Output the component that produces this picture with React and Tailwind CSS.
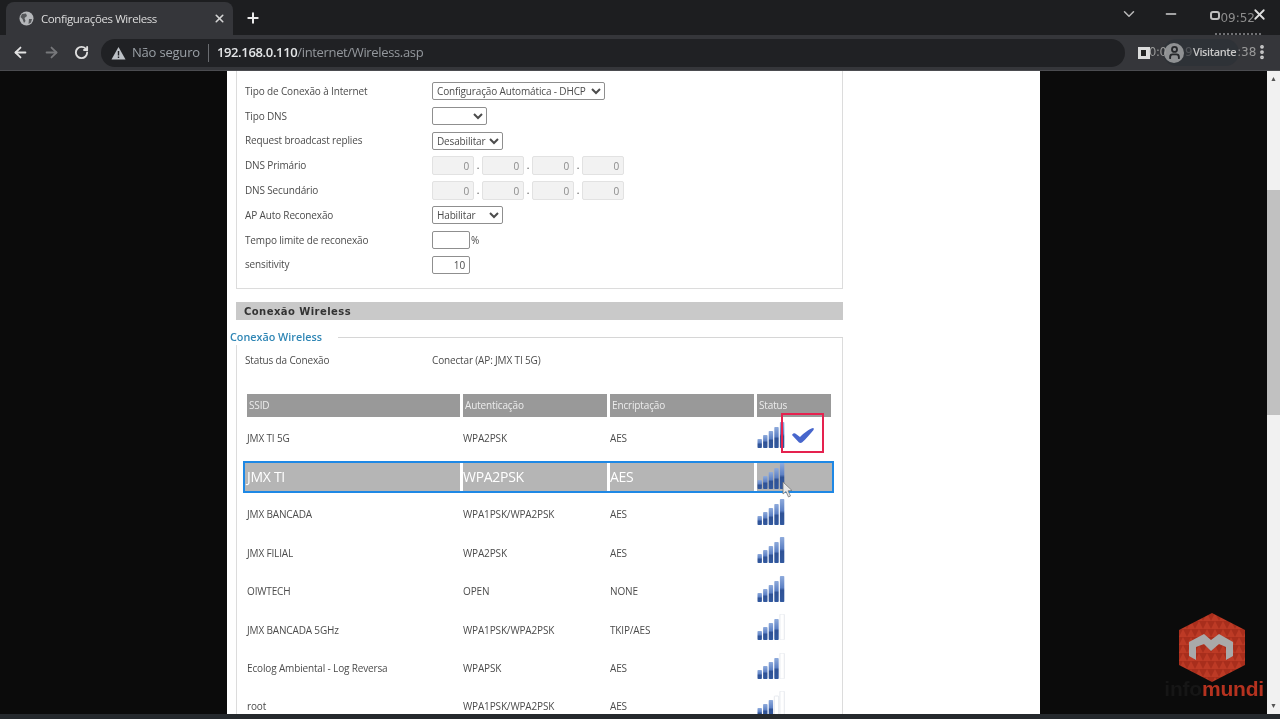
import React from 'react';
import { ArrowLeft, ArrowRight, ChevronDown, EllipsisVertical, Minus, Plus, RotateCw, User, X } from 'lucide-react';

const campos = [
  { label: 'Tipo de Conexão à Internet', tipo: 'select', largura: 'w-[173px]', valor: 'Configuração Automática - DHCP' },
  { label: 'Tipo DNS', tipo: 'select', largura: 'w-[55px]', valor: '' },
  { label: 'Request broadcast replies', tipo: 'select', largura: 'w-[71px]', valor: 'Desabilitar' },
  { label: 'DNS Primário', tipo: 'ip' },
  { label: 'DNS Secundário', tipo: 'ip' },
  { label: 'AP Auto Reconexão', tipo: 'select', largura: 'w-[71px]', valor: 'Habilitar' },
  { label: 'Tempo limite de reconexão', tipo: 'percent' },
  { label: 'sensitivity', tipo: 'input', valor: '10' },
];

const redes = [
  { ssid: 'JMX TI 5G', auth: 'WPA2PSK', enc: 'AES', sinal: 5, conectado: true },
  { ssid: 'JMX TI', auth: 'WPA2PSK', enc: 'AES', sinal: 5, selecionado: true },
  { ssid: 'JMX BANCADA', auth: 'WPA1PSK/WPA2PSK', enc: 'AES', sinal: 5 },
  { ssid: 'JMX FILIAL', auth: 'WPA2PSK', enc: 'AES', sinal: 5 },
  { ssid: 'OIWTECH', auth: 'OPEN', enc: 'NONE', sinal: 5 },
  { ssid: 'JMX BANCADA 5GHz', auth: 'WPA1PSK/WPA2PSK', enc: 'TKIP/AES', sinal: 4 },
  { ssid: 'Ecolog Ambiental - Log Reversa', auth: 'WPAPSK', enc: 'AES', sinal: 4 },
  { ssid: 'root', auth: 'WPA1PSK/WPA2PSK', enc: 'AES', sinal: 3 },
];

const colunas = 'grid grid-cols-[213px_144px_144px_74px] gap-x-[3px] w-[584px]';
const colunasSelecionada = 'grid grid-cols-[215px_144px_144px_75px] gap-x-[3px] w-[587px] -ml-[2px]';

const Sinal = ({ nivel, className }) => {
  const barras = [9, 13, 17, 21, 26];
  return (
    <svg width="28" height="26" viewBox="0 0 28 26" className={`shrink-0 ${className}`}>
      <defs>
        <linearGradient id="barra" x1="0" y1="0" x2="0" y2="1">
          <stop offset="0" stopColor="#8fabdc" />
          <stop offset="0.45" stopColor="#5c80c4" />
          <stop offset="0.55" stopColor="#2f5296" />
          <stop offset="1" stopColor="#31589e" />
        </linearGradient>
      </defs>
      {barras.map((h, i) => (
        <rect
          key={h}
          x={0.5 + i * 5.6}
          y={26 - h}
          width="4.4"
          height={h}
          rx="0.8"
          fill={i < nivel ? 'url(#barra)' : '#ffffff'}
          stroke={i < nivel ? 'none' : '#dfe3ea'}
          strokeWidth="0.8"
        />
      ))}
    </svg>
  );
};

const Logo = () => (
  <div className="absolute left-[1166px] top-[613px] flex flex-col items-end w-[98px]">
    <svg width="66" height="69" viewBox="0 0 66 69" className="mr-[19px]">
      <defs>
        <pattern id="tri" width="8" height="8" patternUnits="userSpaceOnUse">
          <rect width="8" height="8" fill="#a82e1c" />
          <path d="M0 8 L4 0 L8 8 Z" fill="#bd3a25" />
        </pattern>
      </defs>
      <path d="M33 0 L66 17 L66 52 L33 69 L0 52 L0 17 Z" fill="url(#tri)" />
      <path d="M10 29 L25 21 L32 27 L40 21 L54 29 L54 43 L47 47 L47 34 L40 31 L32 38 L25 31 L17 34 L17 47 L10 43 Z" fill="#a9a9a9" />
    </svg>
    <div className="flex items-baseline -mt-[3px] font-['Liberation_Sans',sans-serif] font-bold text-[21px] leading-[20px] tracking-[-0.2px]">
      <span className="text-[#161616]">info</span>
      <span className="text-[#b5321f]">mundi</span>
    </div>
  </div>
);

const App = () => {
  return (
    <div className="relative flex flex-col h-[719px] w-[1280px] overflow-hidden bg-[#0b0b0b] font-['Open_Sans',sans-serif] text-[#4c4c4c] text-[10px] tracking-[-0.15px] blur-[0.35px]">
      {/* abas */}
      <div className="flex items-end h-[35px] bg-[#1d1e20] pl-[6px] shrink-0">
        <div className="flex items-center h-[33px] w-[227px] bg-[#35363a] rounded-t-lg pl-[13px] pr-[7px] text-[#dcdcdc] text-[11.5px]">
          <svg width="15" height="15" viewBox="0 0 15 15" className="mr-[7px]">
            <circle cx="7.5" cy="7.5" r="7" fill="#b5b7ba" />
            <path d="M3 3 L7 2.5 L8 5 L5.5 7 L6.5 10 L5 12 L3.5 8 L1.5 6 Z M10 8 L13 8 L12 11.5 L9.5 13 Z" fill="#55575a" />
          </svg>
          <span className="flex-1 tracking-[-0.4px]">Configurações Wireless</span>
          <X size={13} strokeWidth={3} className="text-[#d4d4d4]" />
        </div>
        <Plus size={16} strokeWidth={3} className="text-[#ececec] ml-[12px] mb-[9px]" />
        <div className="flex-1" />
        <ChevronDown size={18} className="text-[#b9b9b9] mb-[12px] mr-[25px]" />
        <Minus size={16} className="text-[#d0d0d0] mb-[13px] mr-[31px]" />
        <div className="w-[10px] h-[9px] border-2 border-[#bdbdbd] rounded-[3px] mb-[15px]" />
        <span className="text-[#8c8c8c] text-[12px] tracking-normal mb-[8px] font-['DejaVu_Sans',sans-serif]">09:52</span>
        <X size={17} strokeWidth={2.5} className="text-[#dedede] mb-[12px] mr-[12px] -ml-[4px]" />
      </div>

      {/* barra de endereco */}
      <div className="relative flex items-center h-[36px] bg-[#35363a] border-b border-[#4b4c50] pl-[12px] shrink-0">
        <ArrowLeft size={17} strokeWidth={2.5} className="text-[#e4e4e4]" />
        <ArrowRight size={17} strokeWidth={2.5} className="text-[#77787b] ml-[14px]" />
        <RotateCw size={15} strokeWidth={3} className="text-[#dedede] ml-[14px]" />
        <div className="flex items-center h-[28px] w-[1024px] ml-[12px] rounded-full bg-[#202124] pl-[10px] text-[13px]">
          <svg width="15" height="14" viewBox="0 0 15 14" className="mr-[6px]">
            <path d="M7.5 1 L14.5 13.5 L0.5 13.5 Z" fill="#bdc1c6" />
            <rect x="6.8" y="5" width="1.4" height="4.5" fill="#202124" />
            <rect x="6.8" y="10.5" width="1.4" height="1.5" fill="#202124" />
          </svg>
          <span className="text-[#9aa0a6] tracking-[-0.2px]">Não seguro</span>
          <span className="w-px h-[18px] bg-[#6a6c70] mx-[8px]" />
          <span className="text-[#e4e6e8] font-semibold tracking-[-0.35px]">192.168.0.110</span>
          <span className="text-[#94989d] tracking-[-0.35px]">/internet/Wireless.asp</span>
        </div>
        <div className="w-[12px] h-[12px] bg-[#e2e2e2] border-[3px] border-[#dcdcdc] ml-[13px] flex">
          <div className="w-[5px] bg-[#222]" />
        </div>
        <span className="absolute left-[1185px] top-[8px] text-[#9a9a9a] text-[12px] tracking-normal font-['DejaVu_Sans',sans-serif] leading-[18px]">9</span>
        <span className="absolute left-[1237px] top-[8px] text-[#9a9a9a] text-[12px] tracking-normal font-['DejaVu_Sans',sans-serif] leading-[18px]">:38</span>
        <div className="absolute left-[1163px] top-[4px] flex items-center h-[27px] w-[76px] rounded-full bg-[#2b3036aa] text-[#c8c8c8] text-[11px]">
          <div className="flex items-center justify-center w-[20px] h-[20px] rounded-full bg-[#8f9193] ml-[1px] mr-[9px]">
            <User size={15} strokeWidth={3} className="text-[#26282b]" />
          </div>
          <span className="font-semibold tracking-[-0.4px]">Visitante</span>
        </div>
        <span className="absolute left-[1149px] top-[8px] text-[#9a9a9a] text-[11.5px] tracking-[-0.3px] font-['DejaVu_Sans',sans-serif] leading-[18px]">0:0</span>
        <EllipsisVertical size={18} strokeWidth={3} className="absolute left-[1253px] top-[8px] text-[#d0d0d0]" />
        <div className="absolute left-[1215px] -top-[2px] w-[46px] border-t-2 border-dotted border-[#6f7073]" />
      </div>

      {/* conteudo */}
      <div className="flex flex-1 min-h-0">
        <div className="ml-[227px] w-[813px] h-full bg-white overflow-hidden pl-[9px]">
          <div className="w-[607px]">
            <div className="h-[218px] border-x border-b border-[#dcdcdc] pt-[8px] pl-[8px]">
              {campos.map((c) => (
                <div key={c.label} className="flex items-center h-[24.8px]">
                  <span className="w-[187px] shrink-0">{c.label}</span>
                  {c.tipo === 'select' && (
                    <select defaultValue={c.valor} className={`${c.largura} h-[18px] border border-[#8f8f8f] rounded-[2px] bg-white text-[10px] tracking-[-0.15px] text-[#4c4c4c]`}>
                      <option>{c.valor}</option>
                    </select>
                  )}
                  {c.tipo === 'ip' && (
                    <div className="flex items-center">
                      {[0, 1, 2, 3].map((n) => (
                        <React.Fragment key={n}>
                          <input
                            readOnly
                            value="0"
                            className="w-[42px] h-[19px] bg-[#f2f2f2] border border-[#e2e2e2] rounded-[2px] text-right pr-[4px] text-[#8a8a8a]"
                          />
                          {n < 3 && <span className="w-[8px] text-center">.</span>}
                        </React.Fragment>
                      ))}
                    </div>
                  )}
                  {c.tipo === 'percent' && (
                    <>
                      <input readOnly value="" className="w-[38px] h-[18px] border border-[#8f8f8f] rounded-[2px]" />
                      <span className="ml-px">%</span>
                    </>
                  )}
                  {c.tipo === 'input' && (
                    <input readOnly value={c.valor} className="w-[38px] h-[18px] border border-[#8f8f8f] rounded-[2px] text-right pr-[4px]" />
                  )}
                </div>
              ))}
            </div>

            <div className="mt-[13px] h-[18px] flex items-center bg-[#c9c9c9] pl-[8px] text-[#333] font-['DejaVu_Sans',sans-serif] font-bold text-[10px] tracking-[0.45px]">
              Conexão Wireless
            </div>

            {/* fieldset */}
            <div className="relative z-10 flex items-center -ml-[6px] mt-[10px] h-[14px]">
              <span className="bg-white pr-[16px] text-[#2f86b5] font-semibold text-[10.8px] tracking-normal whitespace-nowrap">Conexão Wireless</span>
              <div className="flex-1 h-px bg-[#d6d6d6]" />
            </div>
            <div className="-mt-[7px] pt-[7px] border-x border-[#dcdcdc] pl-[8px] pb-[40px]">
              <div className="flex items-center h-[25px] mt-[4px]">
                <span className="w-[187px]">Status da Conexão</span>
                <span>Conectar (AP: JMX TI 5G)</span>
              </div>
              <div className={`${colunas} ml-[2px] mt-[21px] h-[23px] text-[#ececec]`}>
                {['SSID', 'Autenticação', 'Encriptação', 'Status'].map((t) => (
                  <div key={t} className="bg-[#999999] flex items-center pl-[2px]">{t}</div>
                ))}
              </div>
              <div className="ml-[2px] mt-[2px]">
                {redes.map((r) => (
                  <div key={r.ssid} className="relative flex items-center h-[38.4px]">
                    <div className={r.selecionado
                      ? `${colunasSelecionada} items-center h-[28px] text-white text-[14px] tracking-[-0.3px] outline-2 outline-[#1e88e5]`
                      : `${colunas} items-center`}>
                      {[r.ssid, r.auth, r.enc].map((t, i) => (
                        <div key={i} className={`flex items-center whitespace-nowrap ${r.selecionado ? `h-full bg-[#b5b5b5] ${i === 0 ? 'pl-[2px]' : ''}` : ''}`}>{t}</div>
                      ))}
                      <div className={`relative flex items-center ${r.selecionado ? 'h-full bg-[#b5b5b5]' : 'h-[26px]'}`}>
                        <Sinal nivel={r.sinal} className={r.selecionado ? 'mb-[2px]' : 'mb-[6px]'} />
                        {r.conectado && (
                          <div className="absolute left-[24px] top-[-12px] w-[43px] h-[40px] border-2 border-[#e5224f] flex items-center justify-center">
                            <svg width="24" height="17" viewBox="0 0 24 17" className="mt-[4px]">
                              <path d="M1 8 C2 6 4 6 5 7 L9 10 C13 6 18 2 22 1 C23 1 23 2 22.5 3 C19 7 15 12 11 15.5 C10 16 9 16 8 15.5 Z" fill="#4766cc" />
                            </svg>
                          </div>
                        )}
                        {r.selecionado && (
                          <svg width="12" height="18" viewBox="0 0 12 18" className="absolute left-[25px] top-[18px]">
                            <path d="M1 1 L1 13 L4 10.5 L6.5 16 L8.5 15 L6 9.8 L10 9.5 Z" fill="#e8e8e8" stroke="#777777" strokeWidth="0.8" />
                          </svg>
                        )}
                      </div>
                    </div>
                  </div>
                ))}
              </div>
            </div>
          </div>
        </div>
        <div className="flex-1" />
        <div className="flex flex-col items-center w-[13px] h-full bg-[#f1f1f1]">
          <div className="h-[119px] shrink-0 pt-[4px] text-[#555] text-[7px] leading-[8px]">▲</div>
          <div className="w-full h-[225px] bg-[#c1c1c1] shrink-0" />
          <div className="flex-1" />
          <div className="text-[#555] text-[7px] leading-[8px] pb-[4px]">▼</div>
        </div>
      </div>
      <div className="h-[5px] bg-[#25292d] shrink-0" />
      <Logo />
    </div>
  );
};

export default App;
